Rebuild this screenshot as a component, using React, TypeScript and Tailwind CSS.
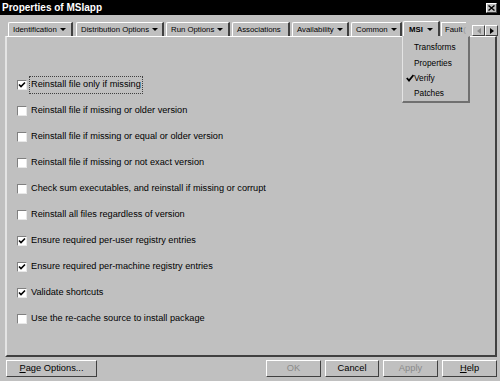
import React from 'react';

const tabs = [
    { label: 'Identification', w: 'w-[65px]', gap: 'mr-[3px]', arrow: true },
    { label: 'Distribution Options', w: 'w-[88px]', gap: 'mr-[2px]', arrow: true },
    { label: 'Run Options', w: 'w-[64px]', gap: 'mr-[2px]', arrow: true },
    { label: 'Associations', w: 'w-[58px]', gap: 'mr-[2px]', arrow: false },
    { label: 'Availability', w: 'w-[57px]', gap: 'mr-[2px]', arrow: true },
    { label: 'Common', w: 'w-[51px]', gap: 'mr-[1px]', arrow: true },
];

const options = [
    { label: 'Reinstall file only if missing', checked: true, focus: true },
    { label: 'Reinstall file if missing or older version', checked: false },
    { label: 'Reinstall file if missing or equal or older version', checked: false },
    { label: 'Reinstall file if missing or not exact version', checked: false },
    { label: 'Check sum executables, and reinstall if missing or corrupt', checked: false },
    { label: 'Reinstall all files regardless of version', checked: false },
    { label: 'Ensure required per-user registry entries', checked: true },
    { label: 'Ensure required per-machine registry entries', checked: true },
    { label: 'Validate shortcuts', checked: true },
    { label: 'Use the re-cache source to install package', checked: false },
];

function DownArrow() {
    return (
        <svg width="6" height="3" viewBox="0 0 6 3" className="ml-auto shrink-0">
            <path d="M0 0 H6 L3 3 Z" fill="#000" />
        </svg>
    );
}

function Tab({ label, w, gap, arrow }: { label: string; w: string; gap: string; arrow: boolean }) {
    return (
        <div className={`${w} ${gap} h-[14px] flex items-center pl-[4px] pr-[5px] border-l border-t border-white border-r-2 border-r-[#404040] rounded-tl-[2px] text-[7.8px] text-black whitespace-nowrap overflow-hidden`}>
            <span className="mr-[3px]">{label}</span>
            {arrow && <DownArrow />}
        </div>
    );
}

function CheckBox({ checked }: { checked: boolean }) {
    return (
        <div className="w-[10px] h-[10px] bg-white border-l border-t border-[#808080] border-r border-b border-r-[#e8e8e8] border-b-[#e8e8e8] flex items-center justify-center shrink-0">
            {checked && (
                <svg width="8" height="8" viewBox="0 0 8 8">
                    <path d="M1 3.5 L3 5.5 L7 1.5" stroke="#000" strokeWidth="1.6" fill="none" />
                </svg>
            )}
        </div>
    );
}

function Button({ children, w, disabled }: { children: React.ReactNode; w: string; disabled?: boolean }) {
    return (
        <div className={`${w} h-[17px] flex items-center justify-center border-l border-t border-white border-r border-b border-r-[#404040] border-b-[#404040] text-[9.3px] ${disabled ? 'text-[#8a8a8a]' : 'text-black'}`}>
            {children}
        </div>
    );
}

export default function App() {
    return (
        <div className="w-[500px] h-[381px] bg-[#c0c0c0] flex flex-col overflow-hidden font-['Liberation_Sans',Arial,sans-serif]">
            {/* Title bar */}
            <div className="h-[15px] bg-black flex items-center pl-[2px] pr-[3px] shrink-0">
                <span className="text-white font-bold text-[10px] leading-none">Properties of MSIapp</span>
                <div className="ml-auto w-[11px] h-[10px] bg-[#c0c0c0] border-l border-t border-white border-r border-b border-r-[#404040] border-b-[#404040] flex items-center justify-center">
                    <svg width="7" height="6" viewBox="0 0 7 6">
                        <path d="M0.5 0.5 L6.5 5.5 M6.5 0.5 L0.5 5.5" stroke="#000" strokeWidth="1.4" />
                    </svg>
                </div>
            </div>

            <div className="relative flex flex-col">
                {/* Tabs */}
                <div className="h-[21px] flex items-end pl-[8px]">
                    {tabs.map((tab) => (
                        <Tab key={tab.label} {...tab} />
                    ))}
                    <div className="w-[37px] mr-[1px] h-[16px] -mb-px relative z-10 bg-[#c0c0c0] flex items-center pl-[5px] pr-[5px] border-l border-t border-white border-r-2 border-r-[#404040] rounded-tl-[2px] text-[7.8px] font-bold text-black">
                        <span>MSI</span>
                        <DownArrow />
                    </div>
                    <div className="w-[25px] h-[14px] flex items-center pl-[3px] border-l border-t border-white text-[7.8px] text-black overflow-hidden">
                        Fault
                        <span className="text-[#9a9a9a] ml-[1px]">(</span>
                    </div>
                    <div className="ml-[6px] flex h-[11px]">
                        <div className="w-[13px] h-[11px] border-l border-t border-white border-r border-b border-r-[#404040] border-b-[#404040] flex items-center justify-center">
                            <svg width="4" height="6" viewBox="0 0 4 6"><path d="M4 0 V6 L0 3 Z" fill="#8a8a8a" /></svg>
                        </div>
                        <div className="w-[13px] h-[11px] border-l border-t border-white border-r border-b border-r-[#404040] border-b-[#404040] flex items-center justify-center">
                            <svg width="4" height="6" viewBox="0 0 4 6"><path d="M0 0 V6 L4 3 Z" fill="#000" /></svg>
                        </div>
                    </div>
                </div>

                {/* Panel */}
                <div className="ml-[5px] w-[492px] h-[321px] border-l-2 border-t border-l-[#e4e4e4] border-t-white border-r-2 border-b-2 border-r-[#404040] border-b-[#404040] pt-[35px] pl-[10px]">
                    <div className="flex flex-col">
                        {options.map((opt) => (
                            <div key={opt.label} className="h-[26px] flex items-center">
                                <CheckBox checked={opt.checked} />
                                <span
                                    className={`ml-[2px] px-[1px] py-[1px] text-[9.2px] text-black whitespace-nowrap ${opt.focus ? 'border border-dotted border-[#404040]' : 'border border-transparent'}`}
                                >
                                    {opt.label}
                                </span>
                            </div>
                        ))}
                    </div>
                </div>

                {/* MSI dropdown menu */}
                <div className="absolute left-[402px] top-[21px] w-[68px] h-[67px] bg-[#c0c0c0] border-l border-t border-l-[#e4e4e4] border-t-[#c0c0c0] border-r-2 border-b-2 border-r-[#707070] border-b-[#707070] z-20 pt-[3px] flex flex-col text-[8.3px] text-black">
                    {['Transforms', 'Properties', 'Verify', 'Patches'].map((item) => (
                        <div key={item} className="h-[15.7px] flex items-center pl-[11px] relative">
                            {item === 'Verify' && (
                                <svg width="8" height="8" viewBox="0 0 8 8" className="absolute left-[3px]">
                                    <path d="M0.8 4 L3 6.5 L7.5 1" stroke="#000" strokeWidth="1.8" fill="none" />
                                </svg>
                            )}
                            {item}
                        </div>
                    ))}
                </div>
            </div>

            {/* Bottom buttons */}
            <div className="flex items-center mt-[3px] pl-[6px] pr-[3px]">
                <Button w="w-[91px]">
                    <span><span className="underline">P</span>age Options...</span>
                </Button>
                <div className="ml-auto flex gap-[4px]">
                    <Button w="w-[55px]" disabled>OK</Button>
                    <Button w="w-[54px]">Cancel</Button>
                    <Button w="w-[55px]" disabled>Apply</Button>
                    <Button w="w-[55px]">
                        <span><span className="underline">H</span>elp</span>
                    </Button>
                </div>
            </div>
        </div>
    );
}
